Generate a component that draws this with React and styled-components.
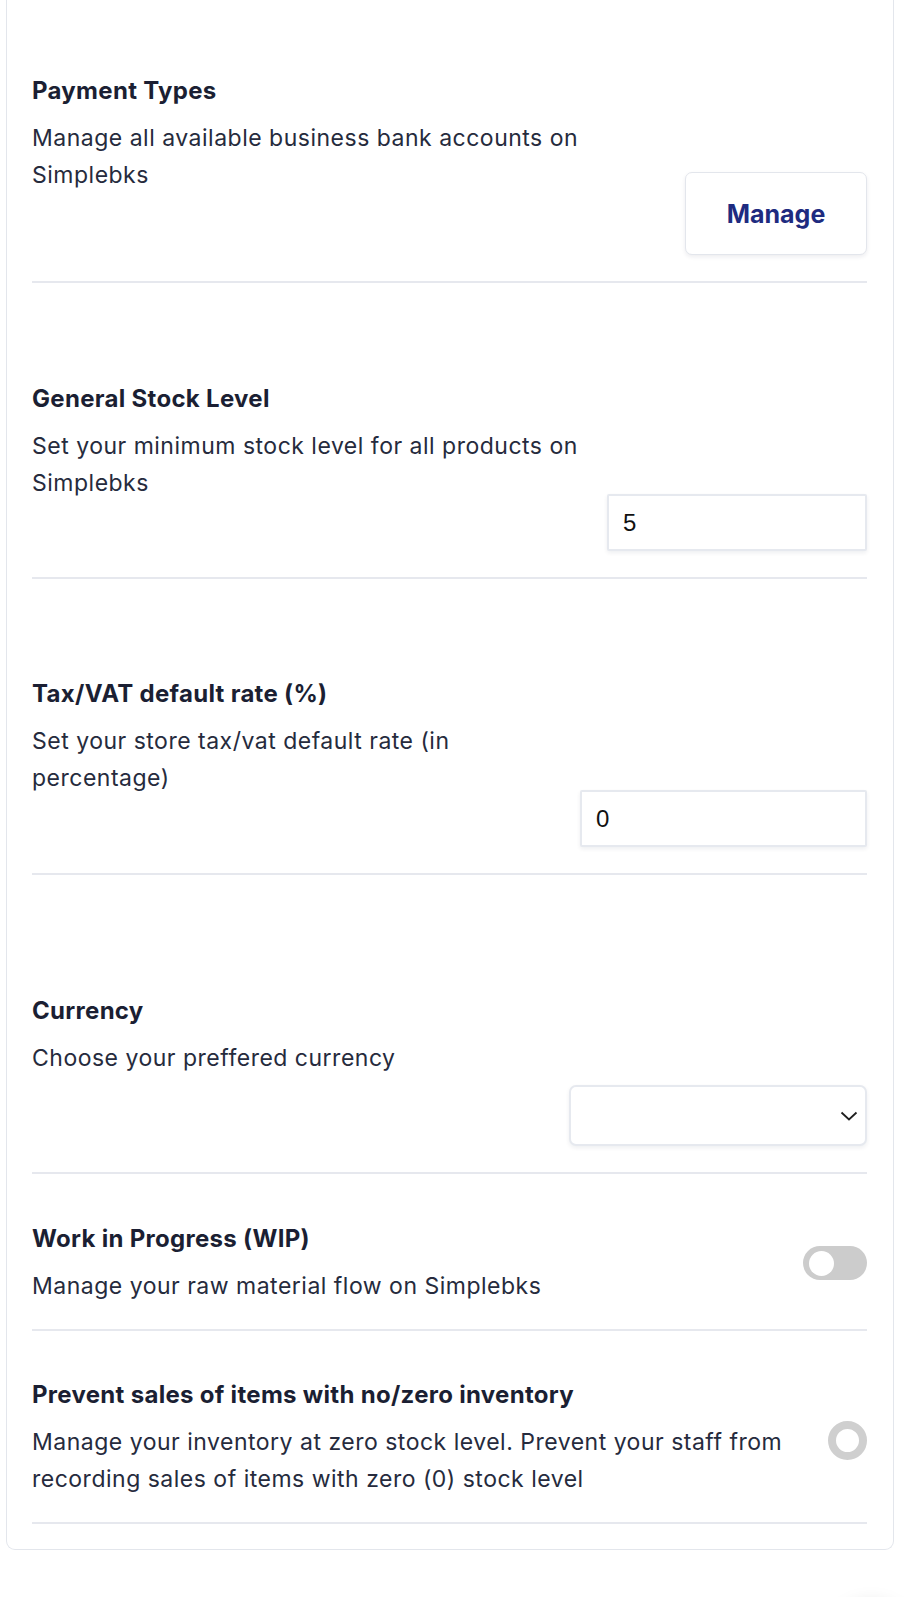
import styled, { createGlobalStyle } from "styled-components";

const GlobalStyle = createGlobalStyle`
  body {
    margin: 0;
    background: #ffffff;
    font-family: Inter, "Noto Sans", sans-serif;
  }
  * { box-sizing: border-box; }
`

const Page = styled.div`
  position: relative;
  padding: 0 0 80px 6px;
`

const Card = styled.div`
  width: 888px;
  border: 1px solid #e3e6ec;
  border-top: 0;
  border-radius: 0 0 9px 9px;
  padding: 0 26px 25px 25px;
  background: #fff;
`

const Section = styled.div`
  display: flex;
  justify-content: space-between;
  align-items: flex-start;
  padding-top: ${p => p.$top}px;
  padding-bottom: ${p => p.$bottom || 26}px;
  border-bottom: 2px solid #e6e8ee;
`

const TextCol = styled.div`
  flex: 1;
  min-width: 0;
  max-width: ${p => p.$max ? p.$max + "px" : "none"};
`

const Title = styled.h3`
  margin: 0;
  font-size: 24px;
  line-height: 28px;
  font-weight: 700;
  color: #1b1f33;
  letter-spacing: 0.3px;
`

const Desc = styled.p`
  margin: 15px 0 0;
  font-size: 23px;
  line-height: 37px;
  font-weight: 400;
  color: #262b3d;
  letter-spacing: 0.5px;
`

const Aside = styled.div`
  flex-shrink: 0;
  margin-left: 24px;
  margin-top: ${p => p.$offset}px;
`

const ManageButton = styled.button`
  width: 182px;
  height: 83px;
  border: 1px solid #e3e6ec;
  border-radius: 7px;
  background: #fff;
  box-shadow: 0 2px 4px rgba(20, 30, 60, 0.08);
  font-family: Inter, "Noto Sans", sans-serif;
  font-size: 25px;
  font-weight: 700;
  color: #1e2b80;
  cursor: pointer;
`

const Field = styled.input`
  display: block;
  width: ${p => p.$w}px;
  height: 57px;
  border: 2px solid #e6e9ef;
  border-radius: 2px;
  padding: 0 14px;
  background: #fff;
  box-shadow: 0 2px 4px rgba(20, 30, 60, 0.07);
  font-family: "Liberation Sans", Arial, sans-serif;
  font-size: 24px;
  color: #111;
  outline: none;
`

const SelectBox = styled.div`
  width: 298px;
  height: 61px;
  border: 2px solid #e6e9ef;
  border-radius: 7px;
  background: #fff;
  box-shadow: 0 2px 4px rgba(20, 30, 60, 0.07);
  display: flex;
  align-items: center;
  justify-content: flex-end;
  padding-right: 7px;
`

const Switch = styled.div`
  width: 64px;
  height: 34px;
  border-radius: 17px;
  background: #cccccc;
  display: flex;
  align-items: center;
  padding-left: 6px;
`

const Knob = styled.span`
  width: 25px;
  height: 25px;
  border-radius: 50%;
  background: #fff;
`

const Ring = styled.div`
  width: 39px;
  height: 39px;
  border-radius: 50%;
  border: 8px solid #cfcfcf;
  background: #fff;
`

const FloatShadow = styled.div`
  position: absolute;
  left: 836px;
  top: 1608px;
  width: 70px;
  height: 70px;
  border-radius: 50%;
  background: #fff;
  box-shadow: 0 0 22px rgba(0, 0, 0, 0.22);
`

function Chevron() {
  return (
    <svg width="18" height="10" viewBox="0 0 18 10" fill="none">
      <polyline points="1.5,1.5 9,8.5 16.5,1.5" stroke="#1f1f1f" strokeWidth="1.8" />
    </svg>
  )
}

export default function App() {
  return (
    <Page>
      <GlobalStyle />
      <Card>
        <Section $top={77}>
          <TextCol $max={575}>
            <Title>Payment Types</Title>
            <Desc>Manage all available business bank accounts on Simplebks</Desc>
          </TextCol>
          <Aside $offset={95}>
            <ManageButton>Manage</ManageButton>
          </Aside>
        </Section>

        <Section $top={102}>
          <TextCol $max={575}>
            <Title>General Stock Level</Title>
            <Desc>Set your minimum stock level for all products on Simplebks</Desc>
          </TextCol>
          <Aside $offset={109}>
            <Field $w={260} defaultValue="5" />
          </Aside>
        </Section>

        <Section $top={101}>
          <TextCol $max={575}>
            <Title>Tax/VAT default rate (%)</Title>
            <Desc>Set your store tax/vat default rate (in percentage)</Desc>
          </TextCol>
          <Aside $offset={110}>
            <Field $w={287} defaultValue="0" />
          </Aside>
        </Section>

        <Section $top={122}>
          <TextCol $max={575}>
            <Title>Currency</Title>
            <Desc>Choose your preffered currency</Desc>
          </TextCol>
          <Aside $offset={88}>
            <SelectBox>
              <Chevron />
            </SelectBox>
          </Aside>
        </Section>

        <Section $top={51} $bottom={24}>
          <TextCol>
            <Title>Work in Progress (WIP)</Title>
            <Desc>Manage your raw material flow on Simplebks</Desc>
          </TextCol>
          <Aside $offset={21}>
            <Switch>
              <Knob />
            </Switch>
          </Aside>
        </Section>

        <Section $top={50} $bottom={24}>
          <TextCol>
            <Title>Prevent sales of items with no/zero inventory</Title>
            <Desc>Manage your inventory at zero stock level. Prevent your staff from recording sales of items with zero (0) stock level</Desc>
          </TextCol>
          <Aside $offset={40}>
            <Ring />
          </Aside>
        </Section>
      </Card>
      <FloatShadow />
    </Page>
  )
}
